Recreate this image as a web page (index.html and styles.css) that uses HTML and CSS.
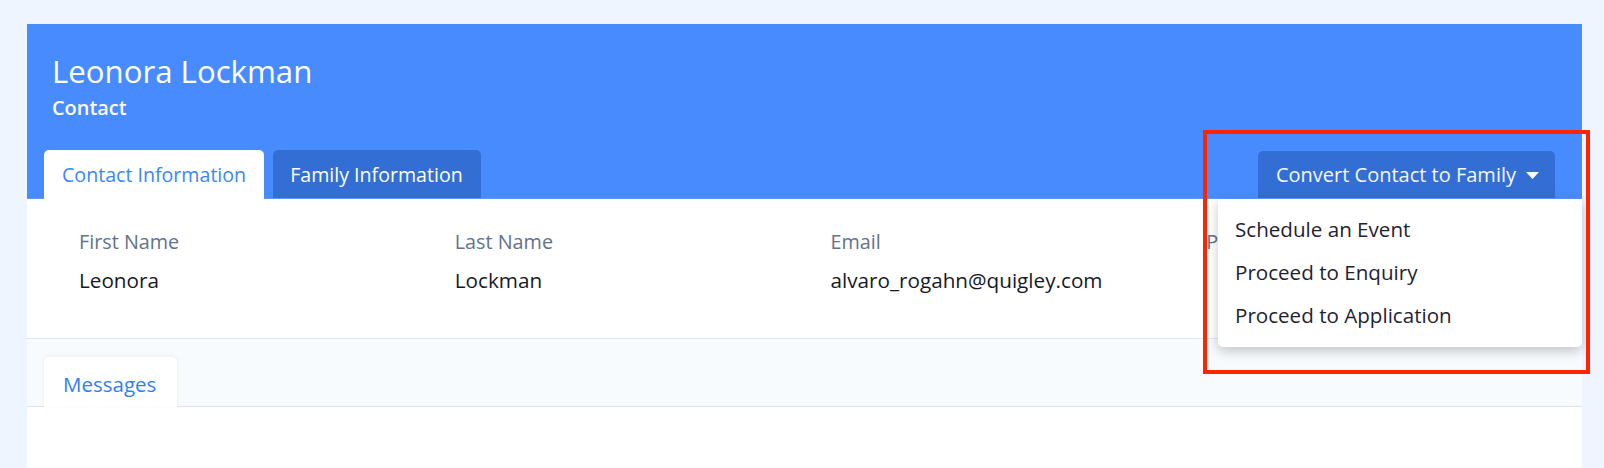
FILE: index.html
```html
<!DOCTYPE html>
<html lang="en">
<head>
<meta charset="utf-8">
<title>Leonora Lockman – Contact</title>
<link rel="stylesheet" href="styles.css">
</head>
<body>
<div class="page">
  <div class="card">
    <div class="header">
      <div class="heading">
        <h1 class="title">Leonora Lockman</h1>
        <div class="subtitle">Contact</div>
      </div>
      <div class="tabbar">
        <div class="tabs">
          <div class="tab tab-active">Contact Information</div>
          <div class="tab tab-inactive">Family Information</div>
        </div>
        <div class="action">
          <button class="convert-btn">Convert Contact to Family
            <svg class="caret" width="13" height="7" viewBox="0 0 13 7"><polygon points="0,0 13,0 6.5,7" fill="#ffffff"/></svg>
          </button>
        </div>
      </div>
      <div class="menu">
        <div class="menu-item">Schedule an Event</div>
        <div class="menu-item">Proceed to Enquiry</div>
        <div class="menu-item">Proceed to Application</div>
      </div>
    </div>
    <div class="details">
      <div class="field">
        <div class="label">First Name</div>
        <div class="value">Leonora</div>
      </div>
      <div class="field">
        <div class="label">Last Name</div>
        <div class="value">Lockman</div>
      </div>
      <div class="field">
        <div class="label">Email</div>
        <div class="value">alvaro_rogahn@quigley.com</div>
      </div>
      <div class="field">
        <div class="label">Phone</div>
        <div class="value"></div>
      </div>
    </div>
    <div class="subtabs">
      <div class="subtab">Messages</div>
    </div>
    <div class="content"></div>
  </div>
  <div class="highlight"></div>
</div>
</body>
</html>
```
FILE: styles.css
```css
html, body {
  margin: 0;
  padding: 0;
  height: 100%;
  overflow: hidden;
}
body {
  background: #eef5fe;
  font-family: "Open Sans", "Noto Sans", sans-serif;
  color: #1b1f2b;
}
.page {
  padding: 24px 22px 0 27px;
  position: relative;
}
.card {
  background: #ffffff;
  min-height: 460px;
}
.header {
  background: #488bff;
  position: relative;
  border-bottom: 1px solid #5d98ff;
}
.heading {
  padding: 26px 0 0 25px;
  color: #ffffff;
}
.title {
  margin: 0;
  font-size: 31.2px;
  font-weight: 400;
  line-height: 42px;
}
.subtitle {
  margin-top: 2px;
  font-size: 19.9px;
  font-weight: 600;
  line-height: 28px;
}
.tabbar {
  display: flex;
  justify-content: space-between;
  align-items: flex-end;
  padding: 0 27px 0 17px;
  margin-top: 28px;
}
.tabs {
  display: flex;
  gap: 9px;
}
.tab {
  font-size: 19.6px;
  line-height: 26px;
  padding: 12px 18px 10px;
  border-radius: 5px 5px 0 0;
  margin-bottom: -1px;
}
.tab-active {
  background: #ffffff;
  color: #3b87f7;
}
.tab-inactive {
  background: #336ed4;
  color: #ffffff;
  margin-bottom: 0;
  padding-left: 17px;
}
.convert-btn {
  display: flex;
  align-items: center;
  gap: 10px;
  height: 47px;
  padding: 0 16px 0 18px;
  border: 0;
  border-radius: 5px 5px 0 0;
  background: #336ed4;
  color: #f3f7ff;
  font-family: inherit;
  font-size: 20px;
}
.caret {
  display: block;
  margin-top: 2px;
}
.menu {
  position: absolute;
  right: 0;
  top: 100%;
  margin-top: 1px;
  width: 364px;
  padding: 9px 0 10px;
  background: #ffffff;
  border-radius: 0 0 5px 5px;
  box-shadow: 0 4px 12px rgba(0, 0, 0, 0.22);
  z-index: 5;
}
.menu-item {
  padding: 0 17px;
  font-size: 20.6px;
  line-height: 43px;
  color: #1f2232;
}
.details {
  display: grid;
  grid-template-columns: repeat(4, 1fr);
  padding: 29px 0 44px 52px;
  border-bottom: 1px solid #dce7f6;
}
.label {
  font-size: 19.8px;
  line-height: 28px;
  color: #64728a;
}
.value {
  margin-top: 10px;
  font-size: 20.7px;
  line-height: 28px;
  min-height: 28px;
  color: #161a26;
}
.subtabs {
  background: #f8fbfe;
  padding: 18px 0 0 17px;
  border-bottom: 1px solid #d7e4f6;
  display: flex;
}
.subtab {
  background: #ffffff;
  color: #2f7ff2;
  font-size: 20.5px;
  line-height: 28px;
  padding: 13px 21px 9px 19px;
  border-radius: 5px 5px 0 0;
  margin-bottom: -1px;
  box-shadow: 0 -1px 4px rgba(0, 0, 0, 0.06);
}
.content {
  height: 80px;
}
.highlight {
  position: absolute;
  left: 1203px;
  top: 130px;
  width: 379px;
  height: 236px;
  border: 4px solid #ff2400;
  z-index: 10;
}
```
